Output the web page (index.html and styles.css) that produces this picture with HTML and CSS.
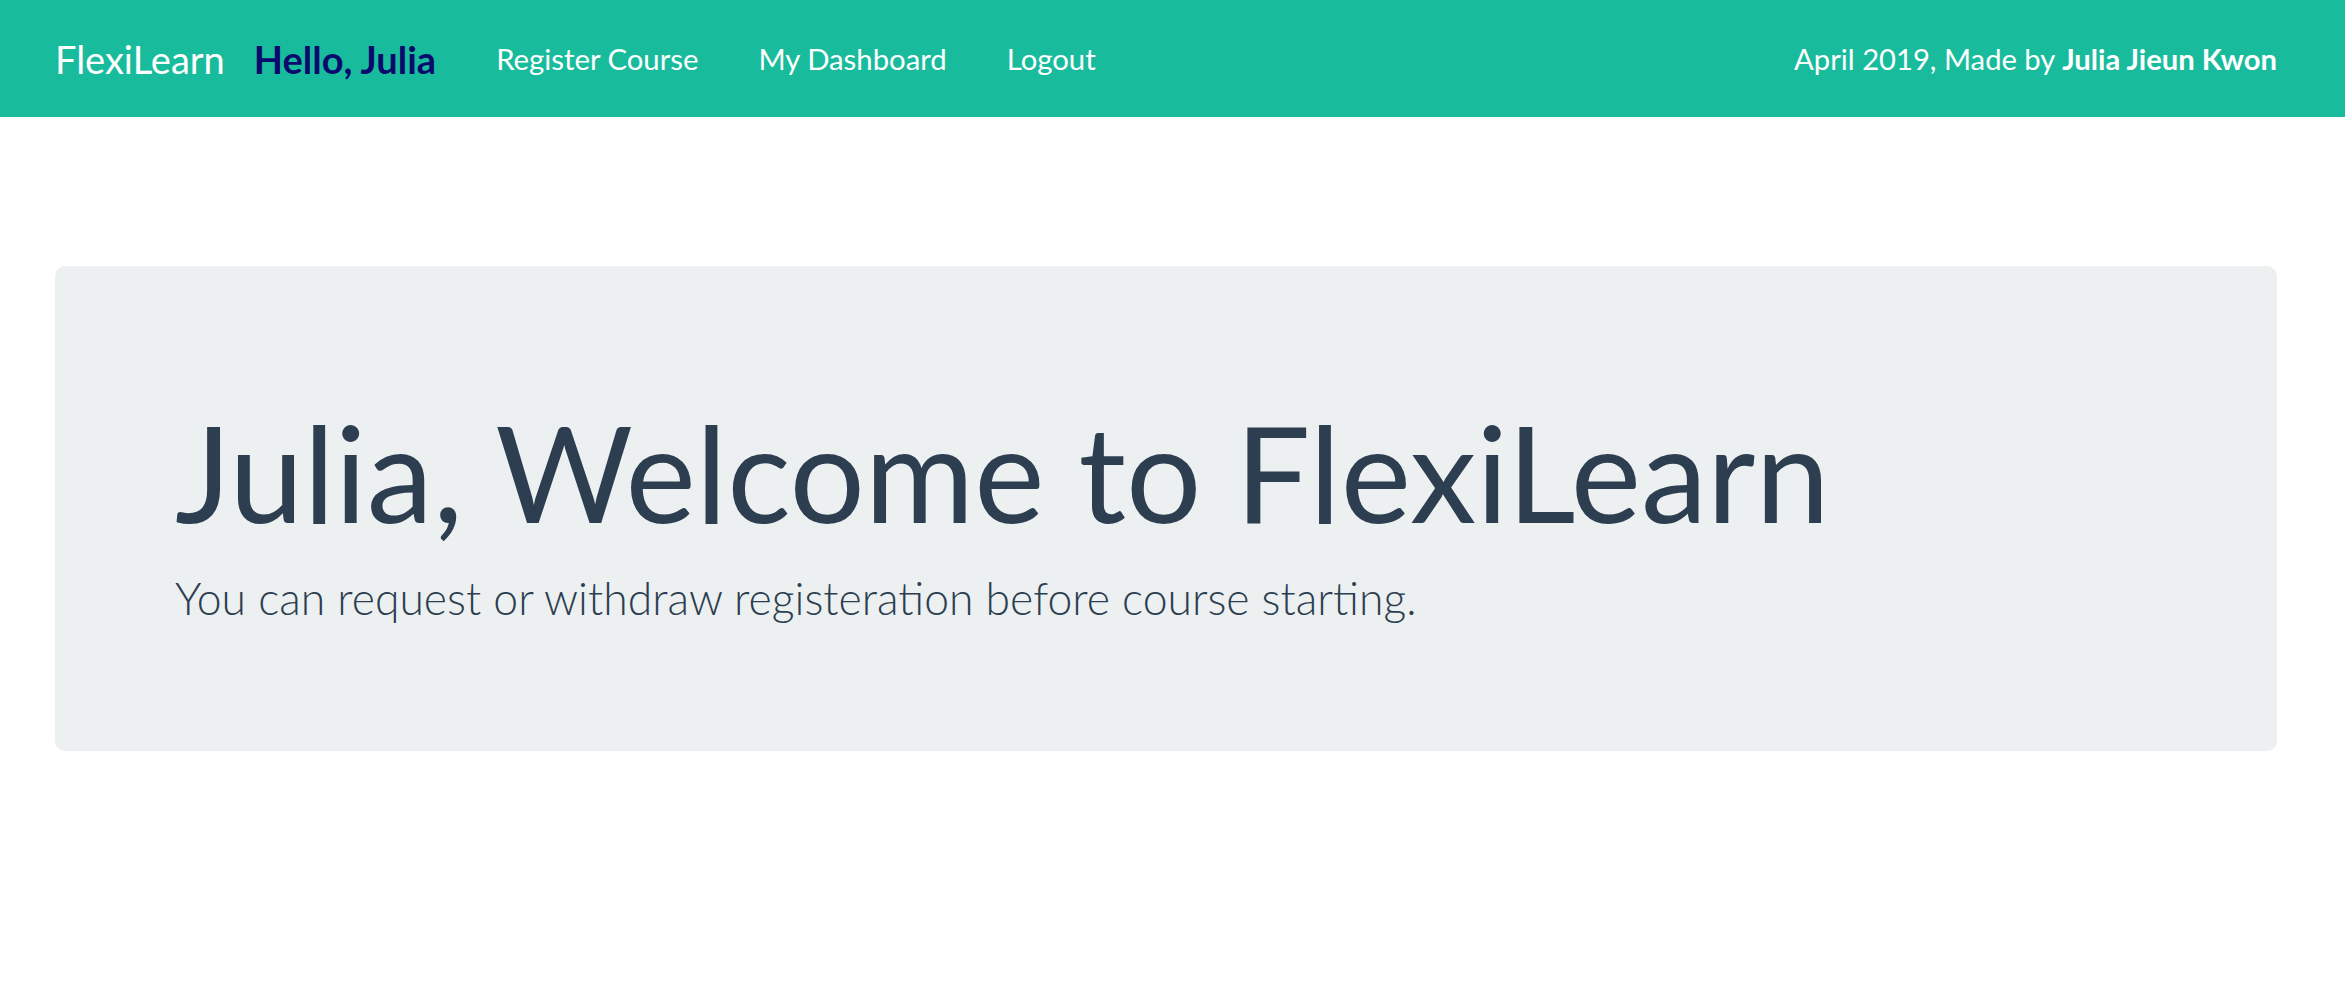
FILE: index.html
```html
<!DOCTYPE html>
<html>
<head>
<meta charset="utf-8">
<link rel="stylesheet" href="styles.css">
</head>
<body>
<nav class="navbar">
  <a class="brand" href="#">FlexiLearn</a>
  <span class="hello">Hello, Julia</span>
  <ul class="nav">
    <li><a href="#">Register Course</a></li>
    <li><a href="#">My Dashboard</a></li>
    <li><a href="#">Logout</a></li>
  </ul>
  <div class="credit">April 2019, Made by <b>Julia Jieun Kwon</b></div>
</nav>
<main class="main">
  <section class="jumbotron">
    <h1 class="title">Julia, Welcome to FlexiLearn</h1>
    <p class="lead">You can request or withdraw registeration before course starting.</p>
  </section>
</main>
</body>
</html>
```
FILE: styles.css
```css
html, body {
  margin: 0;
  padding: 0;
  background: #ffffff;
  font-family: Lato, "Open Sans", sans-serif;
  color: #2c3e50;
}
.navbar {
  height: 117px;
  background: #18bc9c;
  display: flex;
  align-items: center;
  padding: 0 68px 0 55px;
  box-sizing: border-box;
  color: #ffffff;
}
.brand {
  color: #ffffff;
  text-decoration: none;
  font-size: 38px;
  margin-right: 29px;
}
.hello {
  color: #0a0a6e;
  font-weight: 700;
  font-size: 38px;
  margin-right: 60px;
}
.nav {
  list-style: none;
  margin: 0;
  padding: 0;
  display: flex;
  gap: 60px;
  flex: 1;
}
.nav a {
  color: #ffffff;
  text-decoration: none;
  font-size: 29.3px;
}
.credit {
  font-size: 29.2px;
}
.credit b {
  font-weight: 700;
}
.main {
  padding: 149px 68px 0 55px;
}
.jumbotron {
  background: #ecf0f1;
  border-radius: 10px;
  padding: 126px 120px 120px;
}
.title {
  margin: 0 0 13px;
  font-size: 133px;
  font-weight: 400;
  line-height: 1.2;
}
.lead {
  margin: 0;
  font-size: 44.5px;
  font-weight: 300;
  line-height: 1.5;
}
```
